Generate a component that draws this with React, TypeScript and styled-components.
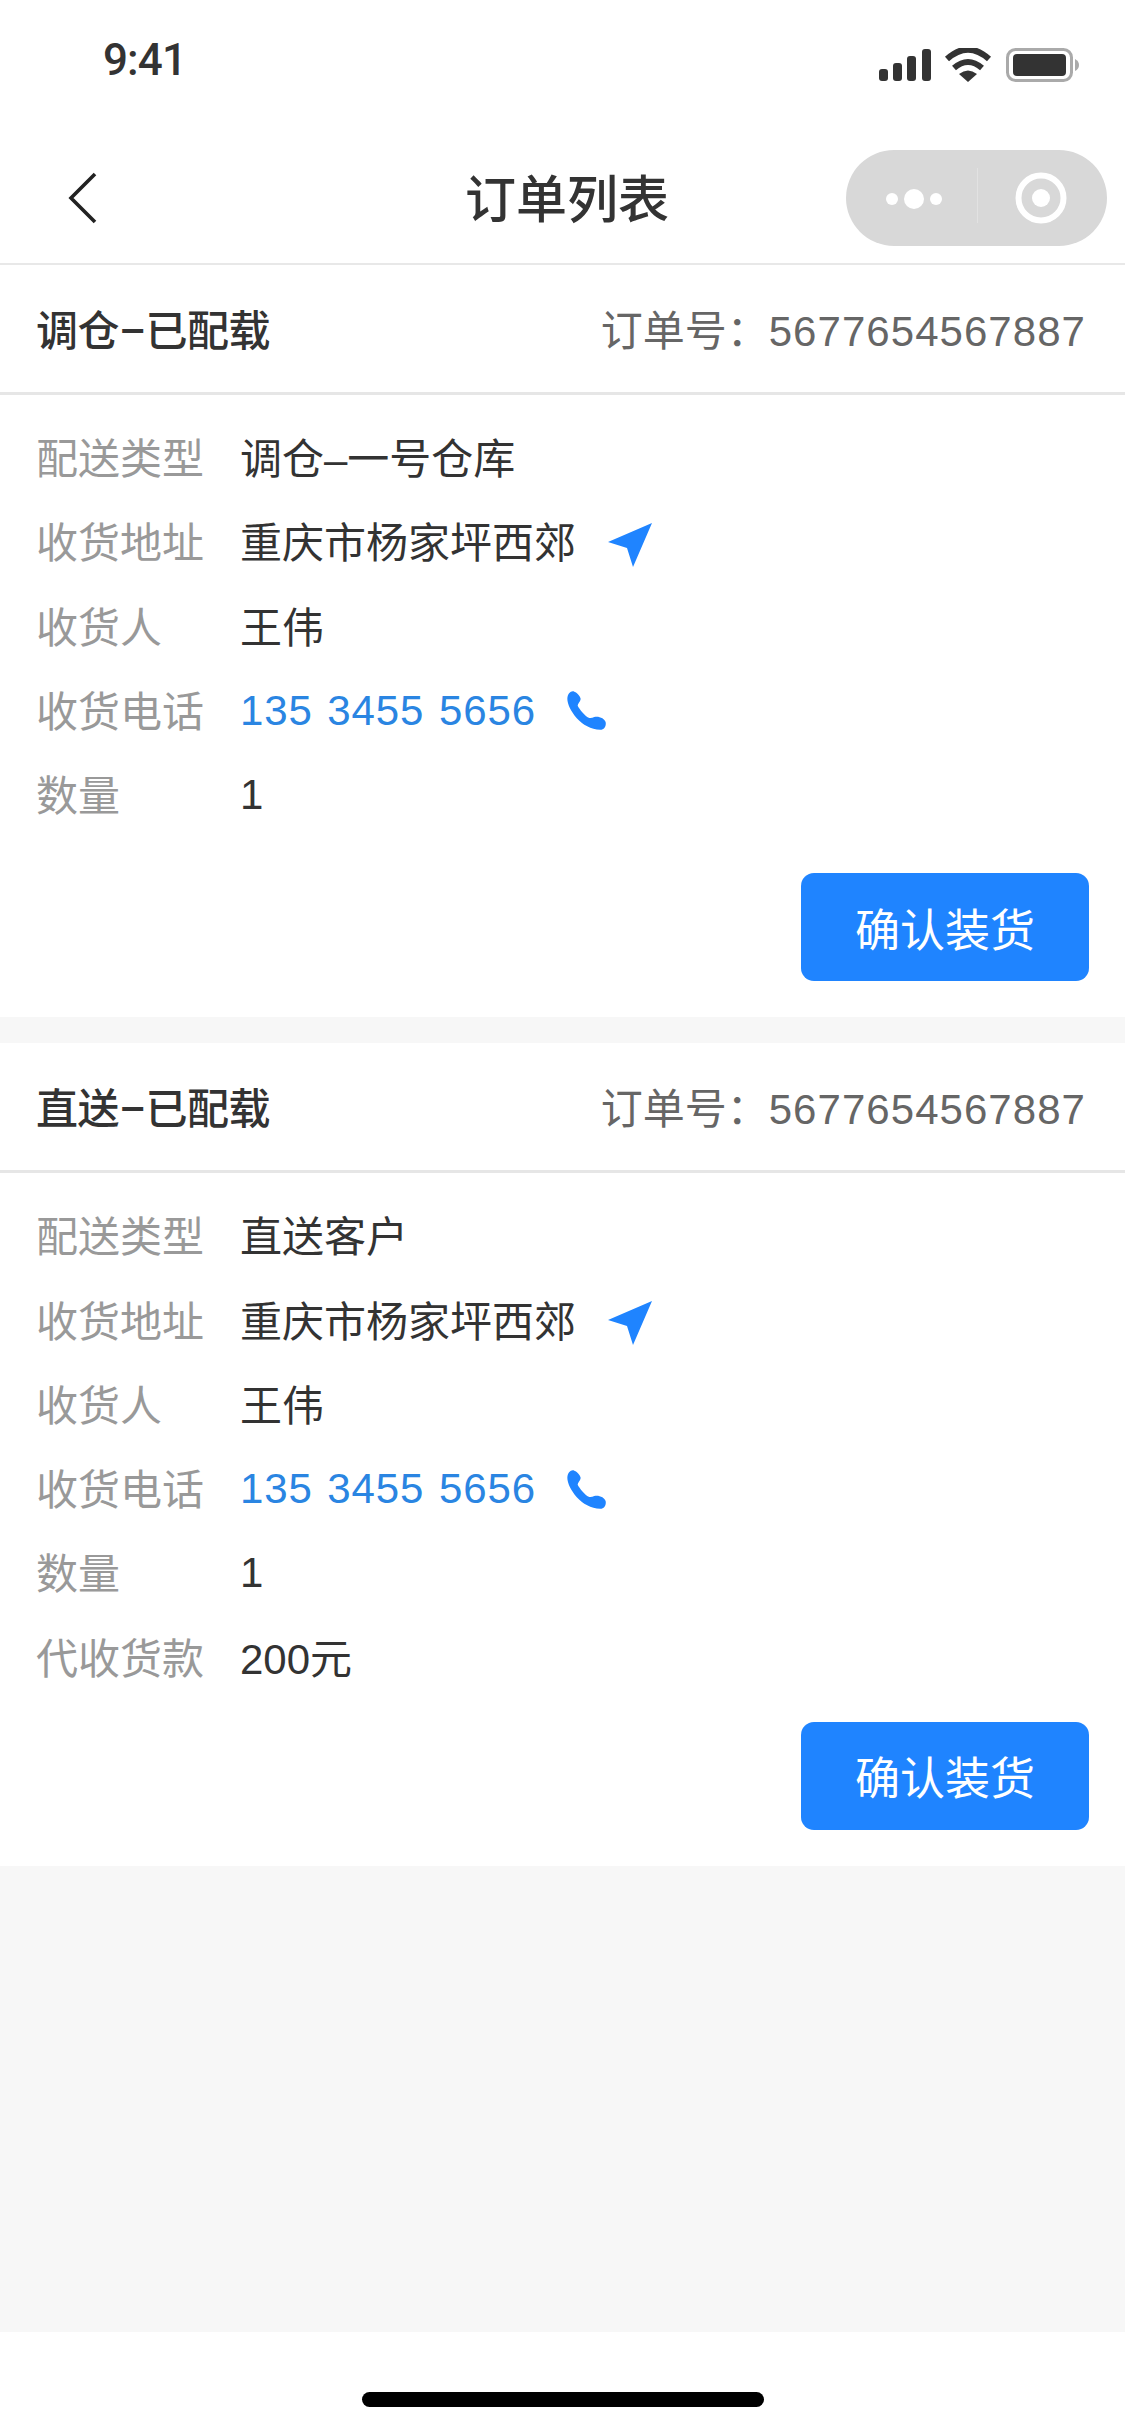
import * as React from 'react';
import styled, { createGlobalStyle } from 'styled-components';

const GlobalStyle = createGlobalStyle`
  html, body {
    margin: 0;
    padding: 0;
    background: #fff;
  }
  * {
    box-sizing: border-box;
  }
`;

const BLUE = '#1f84ff';

const Page = styled.div`
  width: 1125px;
  height: 2436px;
  display: flex;
  flex-direction: column;
  background: #f7f7f7;
  color: #333;
  font-family: 'Liberation Sans', 'Noto Sans CJK SC', sans-serif;
  font-size: 42px;
  overflow: hidden;
`;

const StatusBar = styled.div`
  height: 120px;
  flex: none;
  display: flex;
  justify-content: space-between;
  align-items: flex-start;
  background: #fff;
  padding: 34px 46px 0 103px;
`;

const Time = styled.div`
  font-family: Roboto, sans-serif;
  font-size: 44px;
  font-weight: 500;
  line-height: 52px;
  letter-spacing: -0.9px;
  color: #333;
`;

const StatusIcons = styled.svg`
  display: block;
  margin-top: 14px;
`;

const NavBar = styled.div`
  flex: none;
  display: grid;
  grid-template-columns: 397px 204px 1fr;
  align-items: center;
  background: #fff;
  padding: 30px 18px 17px 68px;
  border-bottom: 2px solid #e8e8e8;
`;

const BackIcon = styled.svg`
  display: block;
`;

const Title = styled.div`
  font-size: 51px;
  font-weight: 500;
  line-height: 90px;
  padding-top: 6px;
  text-align: center;
  color: #333;
`;

const Capsule = styled.div`
  justify-self: end;
  width: 261px;
  height: 96px;
  border-radius: 48px;
  background: #d8d8d8;
  display: flex;
  align-items: center;
`;

const CapsuleIcon = styled.svg`
  display: block;
`;

const CardList = styled.div`
  display: flex;
  flex-direction: column;
  gap: 26px;
`;

const Card = styled.div`
  background: #fff;
`;

const CardHead = styled.div`
  height: 130px;
  display: flex;
  justify-content: space-between;
  align-items: center;
  padding: 0 39px 2px 36px;
  border-bottom: 3px solid #e6e6e6;
`;

const CardTitle = styled.div`
  font-family: Roboto, 'Noto Sans CJK SC', sans-serif;
  font-weight: 500;
  letter-spacing: -0.5px;
  color: #333;
`;

const OrderNo = styled.div`
  color: #666;
`;

const Digits = styled.span`
  letter-spacing: 1.05px;
`;

const CardBody = styled.div`
  padding: 21px 36px 36px 36px;
`;

const Row = styled.div`
  height: 84.25px;
  display: flex;
  align-items: center;
  padding-bottom: 5px;
`;

const Label = styled.div`
  width: 204px;
  flex: none;
  color: #999;
`;

const Value = styled.div<{ $digits?: boolean }>`
  color: #333;
  padding-top: ${(props) => (props.$digits ? '4px' : '0')};
`;

const PhoneNumber = styled.div`
  color: #2a85e2;
  letter-spacing: 0.9px;
  word-spacing: 2px;
  padding-top: 5px;
`;

const NavIcon = styled.svg`
  display: block;
  margin: 10px 0 0 32px;
`;

const PhoneIcon = styled.svg`
  display: block;
  margin: 5px 0 0 31px;
`;

const Footer = styled.div<{ $gap: number }>`
  display: flex;
  justify-content: flex-end;
  margin-top: ${(props) => props.$gap}px;
`;

const ConfirmButton = styled.button`
  width: 288px;
  height: 108px;
  border: none;
  border-radius: 13px;
  padding: 0;
  background: ${BLUE};
  color: #fff;
  font-family: inherit;
  font-size: 45px;
  text-align: center;
`;

const Spacer = styled.div`
  flex: 1;
`;

const HomeArea = styled.div`
  flex: none;
  height: 104px;
  background: #fff;
  display: flex;
  justify-content: center;
  padding-top: 60px;
`;

const HomeBar = styled.div`
  width: 402px;
  height: 15px;
  border-radius: 8px;
  background: #000;
`;

const Status = () => (
  <StatusIcons width="200" height="36" viewBox="879 49 200 36">
    <g fill="#333">
      <rect x="879" y="70" width="9" height="12" rx="3" />
      <rect x="893" y="64" width="9" height="18" rx="3" />
      <rect x="907" y="57" width="9" height="25" rx="3" />
      <rect x="922" y="50" width="9" height="32" rx="3" />
    </g>
    <g fill="none" stroke="#333" strokeWidth="6">
      <path d="M947 60 Q968 41 989 60" />
      <path d="M954 69 Q968 57 982 69" />
    </g>
    <path d="M959 75 Q968 68 977 75 L968 83 Z" fill="#333" />
    <rect x="1007.5" y="50.5" width="64" height="31" rx="8" fill="none" stroke="#aaa" strokeWidth="3" />
    <rect x="1013" y="55" width="53" height="22" rx="4" fill="#333" />
    <path d="M1075 60 Q1079 62 1079 66 Q1079 70 1075 72 Z" fill="#aaa" />
  </StatusIcons>
);

const Rows: React.FC<{ type: string; extra?: string }> = ({ type, extra }) => (
  <>
    <Row>
      <Label>配送类型</Label>
      <Value>{type}</Value>
    </Row>
    <Row>
      <Label>收货地址</Label>
      <Value>重庆市杨家坪西郊</Value>
      <NavIcon width="44" height="44" viewBox="608 523 44 44">
        <path d="M652 523 L608 542 L627 548 L633 567 Z" fill={BLUE} />
      </NavIcon>
    </Row>
    <Row>
      <Label>收货人</Label>
      <Value>王伟</Value>
    </Row>
    <Row>
      <Label>收货电话</Label>
      <PhoneNumber>135 3455 5656</PhoneNumber>
      <PhoneIcon width="39" height="39" viewBox="18 575 117 115">
        <path
          d="M40 576 C30 572 20 582 19 597 C19 628 62 690 118 690 C130 690 136 678 134 668 C132 656 112 648 100 652 C95 654 90 656 85 655 C72 650 55 628 50 618 C50 612 58 606 59 598 C58 590 50 580 40 576 Z"
          fill={BLUE}
        />
      </PhoneIcon>
    </Row>
    <Row>
      <Label>数量</Label>
      <Value $digits>1</Value>
    </Row>
    {extra && (
      <Row>
        <Label>代收货款</Label>
        <Value>{extra}</Value>
      </Row>
    )}
  </>
);

const ORDERS = [
  { title: '调仓–已配载', type: '调仓–一号仓库', gap: 36 },
  { title: '直送–已配载', type: '直送客户', extra: '200元', gap: 22 },
];

export default function App() {
  return (
    <Page>
      <GlobalStyle />
      <StatusBar>
        <Time>9:41</Time>
        <Status />
      </StatusBar>
      <NavBar>
        <BackIcon width="30" height="52" viewBox="0 0 30 52">
          <path d="M27 2 L3 26 L27 50" fill="none" stroke="#222" strokeWidth="3.6" />
        </BackIcon>
        <Title>订单列表</Title>
        <Capsule>
          <CapsuleIcon width="261" height="96" viewBox="846 150 261 96">
            <circle cx="892" cy="199" r="6" fill="#fff" />
            <circle cx="914" cy="199" r="10" fill="#fff" />
            <circle cx="936" cy="199" r="6" fill="#fff" />
            <rect x="977" y="168" width="1" height="55" fill="#e2e2e2" />
            <circle cx="1041" cy="198" r="22.5" fill="none" stroke="#fff" strokeWidth="6" />
            <circle cx="1041" cy="198" r="9" fill="#fff" />
          </CapsuleIcon>
        </Capsule>
      </NavBar>
      <CardList>
        {ORDERS.map((order) => (
          <Card key={order.title}>
            <CardHead>
              <CardTitle>{order.title}</CardTitle>
              <OrderNo>
                订单号：<Digits>5677654567887</Digits>
              </OrderNo>
            </CardHead>
            <CardBody>
              <Rows type={order.type} extra={order.extra} />
              <Footer $gap={order.gap}>
                <ConfirmButton>确认装货</ConfirmButton>
              </Footer>
            </CardBody>
          </Card>
        ))}
      </CardList>
      <Spacer />
      <HomeArea>
        <HomeBar />
      </HomeArea>
    </Page>
  );
}
